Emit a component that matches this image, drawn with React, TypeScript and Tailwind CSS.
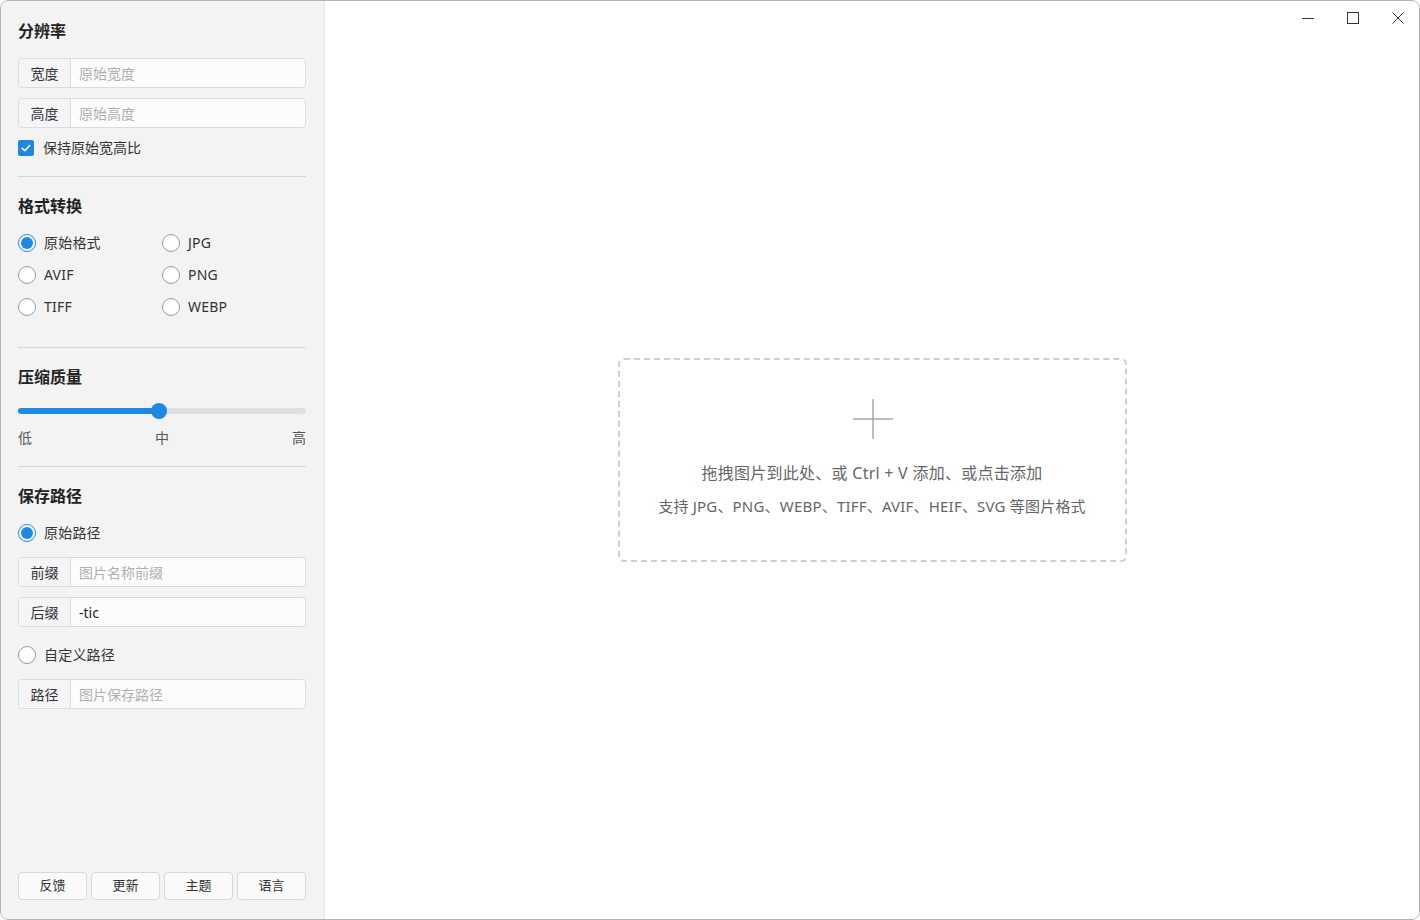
import { useState } from 'react';

const font = { fontFamily: '"Noto Sans", "Noto Sans CJK SC", sans-serif' };

function SectionTitle({ children }: { children: string }) {
  return <div className="text-[16px] font-bold leading-[22px] text-[#222]">{children}</div>;
}

function Divider({ className = '' }: { className?: string }) {
  return <div className={`h-px bg-[#d6d6d6] ${className}`} />;
}

function InputGroup({
  label,
  placeholder,
  value,
  className = '',
}: {
  label: string;
  placeholder: string;
  value?: string;
  className?: string;
}) {
  return (
    <div
      className={`flex h-[30px] overflow-hidden rounded-[4px] border border-[#dcdcdc] bg-[#fcfcfc] ${className}`}
    >
      <div className="flex w-[52px] shrink-0 items-center justify-center border-r border-[#dcdcdc] bg-[#f5f5f7] text-[14px] text-[#333]">
        {label}
      </div>
      <input
        defaultValue={value}
        placeholder={placeholder}
        className="min-w-0 flex-1 bg-transparent pl-[8px] text-[14px] text-[#222] outline-none placeholder:text-[#b0b0b0]"
      />
    </div>
  );
}

function Radio({ label, checked, onClick }: { label: string; checked: boolean; onClick: () => void }) {
  return (
    <button type="button" onClick={onClick} className="flex h-[20px] items-center gap-[8px] text-left">
      {checked ? (
        <span className="flex h-[18px] w-[18px] items-center justify-center rounded-full border-[1.5px] border-[#1e88e5] bg-white">
          <span className="h-[12px] w-[12px] rounded-full bg-[#1e88e5]" />
        </span>
      ) : (
        <span className="h-[18px] w-[18px] rounded-full border border-[#9a9a9a] bg-white" />
      )}
      <span className="text-[14px] leading-[20px] tracking-[0.2px] text-[#333]">{label}</span>
    </button>
  );
}

export default function App() {
  const [format, setFormat] = useState('原始格式');
  const [pathMode, setPathMode] = useState('original');
  const [keepRatio, setKeepRatio] = useState(true);
  const [quality, setQuality] = useState(49);

  const formats = ['原始格式', 'JPG', 'AVIF', 'PNG', 'TIFF', 'WEBP'];

  return (
    <div style={font} className="flex h-[920px] w-[1420px] overflow-hidden rounded-[8px] border border-[#b4b4b4] bg-white">
      <aside className="flex w-[324px] shrink-0 flex-col border-r border-[#e6e6e6] bg-[#f3f3f3] pb-[19px] pl-[17px] pr-[18px] pt-[19px]">
        <SectionTitle>分辨率</SectionTitle>
        <InputGroup className="mt-[16px]" label="宽度" placeholder="原始宽度" />
        <InputGroup className="mt-[10px]" label="高度" placeholder="原始高度" />
        <button
          type="button"
          onClick={() => setKeepRatio(!keepRatio)}
          className="mt-[10px] flex h-[20px] items-center gap-[9px]"
        >
          {keepRatio ? (
            <span className="flex h-[16px] w-[16px] items-center justify-center rounded-[2px] bg-[#1e88e5]">
              <svg width="12" height="12" viewBox="0 0 12 12" fill="none">
                <path d="M2.2 6.3l2.5 2.4 5-5.2" stroke="#fff" strokeWidth="1.6" strokeLinecap="round" strokeLinejoin="round" />
              </svg>
            </span>
          ) : (
            <span className="h-[16px] w-[16px] rounded-[2px] border border-[#9a9a9a] bg-white" />
          )}
          <span className="text-[14px] leading-[20px] text-[#333]">保持原始宽高比</span>
        </button>
        <Divider className="mt-[18px]" />

        <div className="mt-[18px]">
          <SectionTitle>格式转换</SectionTitle>
        </div>
        <div className="mt-[16px] grid grid-cols-[144px_1fr] gap-y-[12px]">
          {formats.map((f) => (
            <Radio key={f} label={f} checked={format === f} onClick={() => setFormat(f)} />
          ))}
        </div>
        <Divider className="mt-[30px]" />

        <div className="mt-[18px]">
          <SectionTitle>压缩质量</SectionTitle>
        </div>
        <div className="relative mt-[15px] flex h-[16px] items-center">
          <div className="h-[6px] w-full rounded-full bg-[#e0e0e0]" />
          <div
            className="absolute left-0 h-[6px] rounded-full bg-[#1e88e5]"
            style={{ width: `${quality}%` }}
          />
          <div
            className="absolute h-[16px] w-[16px] -translate-x-1/2 rounded-full bg-[#1e88e5]"
            style={{ left: `${quality}%` }}
          />
          <input
            type="range"
            min={0}
            max={100}
            value={quality}
            onChange={(e) => setQuality(Number(e.target.value))}
            className="absolute inset-0 w-full cursor-pointer opacity-0"
          />
        </div>
        <div className="mt-[9px] flex h-[20px] items-center justify-between text-[14px] leading-[20px] text-[#555]">
          <span>低</span>
          <span>中</span>
          <span>高</span>
        </div>
        <Divider className="mt-[18px]" />

        <div className="mt-[18px]">
          <SectionTitle>保存路径</SectionTitle>
        </div>
        <div className="mt-[16px]">
          <Radio label="原始路径" checked={pathMode === 'original'} onClick={() => setPathMode('original')} />
        </div>
        <InputGroup className="mt-[14px]" label="前缀" placeholder="图片名称前缀" />
        <InputGroup className="mt-[10px]" label="后缀" placeholder="" value="-tic" />
        <div className="mt-[18px]">
          <Radio label="自定义路径" checked={pathMode === 'custom'} onClick={() => setPathMode('custom')} />
        </div>
        <InputGroup className="mt-[14px]" label="路径" placeholder="图片保存路径" />

        <div className="mt-auto grid grid-cols-4 gap-[4px]">
          {['反馈', '更新', '主题', '语言'].map((b) => (
            <button
              key={b}
              type="button"
              className="h-[28px] rounded-[4px] border border-[#d9d9d9] bg-[#fafafa] text-[13px] text-[#333] hover:bg-white"
            >
              {b}
            </button>
          ))}
        </div>
      </aside>

      <main className="relative flex flex-1 items-center justify-center bg-white">
        <div className="absolute right-[14px] top-[10px] flex items-center gap-[31px]">
          <button type="button" aria-label="最小化" className="flex h-[14px] w-[14px] items-center justify-center">
            <svg width="12" height="12" viewBox="0 0 12 12">
              <path d="M0 6.5h12" stroke="#333" strokeWidth="1" />
            </svg>
          </button>
          <button type="button" aria-label="最大化" className="flex h-[14px] w-[14px] items-center justify-center">
            <svg width="12" height="12" viewBox="0 0 12 12" fill="none">
              <rect x="0.5" y="0.5" width="11" height="11" stroke="#333" strokeWidth="1" />
            </svg>
          </button>
          <button type="button" aria-label="关闭" className="flex h-[14px] w-[14px] items-center justify-center">
            <svg width="12" height="12" viewBox="0 0 12 12" fill="none">
              <path d="M0.5 0.5l11 11M11.5 0.5l-11 11" stroke="#333" strokeWidth="1" />
            </svg>
          </button>
        </div>

        <div className="flex h-[204px] w-[509px] flex-col items-center rounded-[6px] border-2 border-dashed border-[#cfcfcf] pt-[39px]">
          <svg width="40" height="40" viewBox="0 0 40 40" fill="none" className="translate-x-[1px]">
            <path d="M20 0v40M0 20h40" stroke="#a8a8a8" strokeWidth="1.5" />
          </svg>
          <div className="mt-[23px] text-[16px] leading-[22px] tracking-[0.25px] text-[#666]">
            拖拽图片到此处、或 Ctrl + V 添加、或点击添加
          </div>
          <div className="mt-[12px] text-[15px] leading-[20px] tracking-[0.2px] text-[#666]">
            支持 JPG、PNG、WEBP、TIFF、AVIF、HEIF、SVG 等图片格式
          </div>
        </div>
      </main>
    </div>
  );
}
